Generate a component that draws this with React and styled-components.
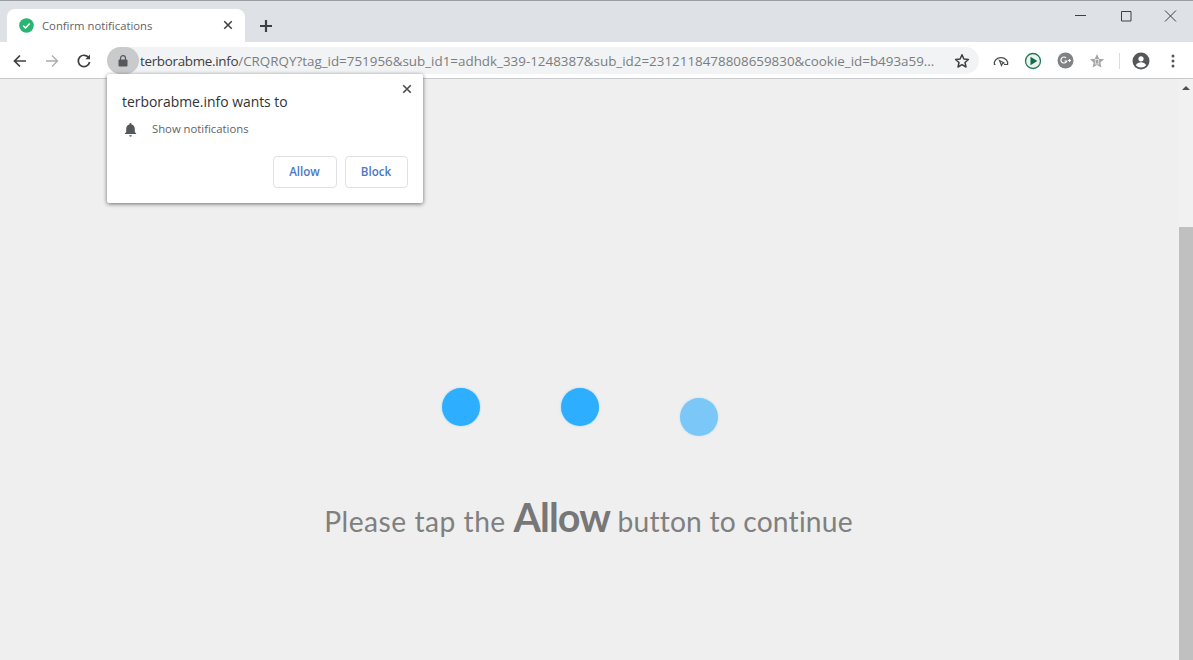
import React from "react";
import styled, { createGlobalStyle } from "styled-components";

const Global = createGlobalStyle`
  html, body { margin: 0; padding: 0; height: 100%; overflow: hidden; background: #efefef; }
  #root { height: 100%; }
  * { box-sizing: border-box; }
`;

const Browser = styled.div`
  width: 1193px; height: 660px; display: flex; flex-direction: column; position: relative; overflow: hidden;
  font-family: "Open Sans", "Noto Sans", sans-serif;
`;
const TabStrip = styled.div`
  height: 42px; flex: none; background: #dee1e6; border-top: 1px solid #9a9da1;
  display: flex; align-items: flex-end; padding-left: 7px;
`;
const Tab = styled.div`
  width: 238px; height: 33px; background: #fff; border-radius: 8px 8px 0 0;
  display: flex; align-items: center; padding: 0 11px 1px 12px;
`;
const TabTitle = styled.span`
  margin-left: 8px; flex: 1; font-size: 11.3px; color: #5f6368;
`;
const NewTab = styled.div`
  width: 16px; height: 16px; margin: 0 0 8px 13px; display: flex;
`;
const WindowControls = styled.div`
  margin-left: auto; align-self: flex-start; display: flex; gap: 29px; padding: 7px 14px 0 0;
`;
const Toolbar = styled.div`
  height: 37px; flex: none; background: #fff; border-bottom: 1px solid #c8cacc;
  display: flex; align-items: center; padding: 1px 12px 0 12px;
`;
const NavIcon = styled.div`
  width: 16px; height: 16px; display: flex; margin-right: ${p => p.$gap}px;
`;
const Omnibox = styled.div`
  width: 872px; height: 27px; margin-left: 15px; background: #f1f3f4; border-radius: 14px;
  display: flex; align-items: center;
`;
const LockChip = styled.div`
  width: 32px; height: 27px; border-radius: 14px; background: #c8cacc; display: flex; align-items: center; justify-content: center; flex: none;
`;
const Url = styled.div`
  margin-left: 1px; flex: 1; font-size: 13.4px; color: #7a7e82; white-space: nowrap;
  b { font-weight: 400; color: #3c4043; letter-spacing: -0.3px; }
`;
const Extensions = styled.div`
  display: flex; align-items: center; margin-left: 13px;
`;
const ExtIcon = styled.div`
  width: 18px; height: 18px; display: flex; align-items: center; justify-content: center; margin-right: ${p => p.$gap}px;
`;
const Divider = styled.div`
  width: 1px; height: 16px; background: #dadce0; margin-right: 12px;
`;
const Page = styled.div`
  flex: 1; display: flex; min-height: 0; background: #efefef;
`;
const Content = styled.main`
  flex: 1; display: flex; flex-direction: column; align-items: center; padding-top: 309px;
`;
const Dots = styled.div`
  display: flex; gap: 81px; height: 48px; margin-left: -20px;
`;
const Dot = styled.div`
  width: 38px; height: 38px; border-radius: 50%; background: #2eaefe; opacity: ${p => p.$fade};
  margin-top: ${p => p.$drop}px; box-shadow: 0 0 2px rgba(46, 174, 254, .5);
`;
const Message = styled.div`
  margin-top: 46px; margin-left: -2px; height: 70px; font-family: "Lato", "Open Sans", sans-serif; font-size: 28.2px; line-height: 70px; color: #808080; white-space: nowrap; letter-spacing: 0.5px;
  strong { font-size: 39.5px; font-weight: 700; color: #777; letter-spacing: -0.9px; }
`;
const MessageTail = styled.span`
  letter-spacing: 0.2px;
`;
const Scrollbar = styled.div`
  width: 14px; flex: none; background: #f1f1f1; display: flex; flex-direction: column; align-items: center;
`;
const ScrollArrow = styled.div`
  margin-top: 7px; width: 0; height: 0; border-left: 4px solid transparent; border-right: 4px solid transparent; border-bottom: 4px solid #505050;
`;
const ScrollThumb = styled.div`
  width: 100%; margin-top: auto; height: 433px; background: #c0c0c0;
`;
const Popup = styled.div`
  position: absolute; left: 107px; top: 74px; width: 316px; height: 129px; background: #fff;
  border-radius: 2px; box-shadow: 0 1px 4px rgba(0,0,0,.55); padding: 18px 15px 0 16px;
`;
const PopupTitle = styled.div`
  font-size: 13.9px; line-height: 19px; color: #303336; margin-left: -1px;
`;
const PopupClose = styled.div`
  position: absolute; right: 10px; top: 9px; width: 12px; height: 12px; display: flex;
`;
const PermRow = styled.div`
  display: flex; align-items: center; margin-top: 9px; font-size: 11.3px; line-height: 18px; color: #5f6368;
`;
const PermIcon = styled.div`
  width: 15px; height: 15px; margin-right: 14px; display: flex;
`;
const Actions = styled.div`
  display: flex; justify-content: flex-end; gap: 8px; margin-top: 18px;
`;
const Btn = styled.button`
  width: ${p => p.$w}px; height: 32px; background: #fff; border: 1px solid #dfe1e5; border-radius: 4px;
  font: 600 11.6px "Open Sans", sans-serif; color: #4a77c4; padding: 0 1px 2px 0;
`;

const Stroke = ({ children, size = 16, color = "#3c4043", w = 1.6 }) => (
  <svg width={size} height={size} viewBox="0 0 16 16" fill="none" stroke={color} strokeWidth={w}>{children}</svg>
);

export default function App() {
  return (
    <Browser>
      <Global />
      <TabStrip>
        <Tab>
          <svg width="15" height="15" viewBox="0 0 15 15">
            <circle cx="7.5" cy="7.5" r="7.3" fill="#2ab573" />
            <path d="M4.2 7.7l2.3 2.2 4.2-4.3" fill="none" stroke="#fff" strokeWidth="1.5" />
          </svg>
          <TabTitle>Confirm notifications</TabTitle>
          <Stroke size={12} w={2}><path d="M3 3l10 10M13 3L3 13" /></Stroke>
        </Tab>
        <NewTab>
          <Stroke size={16} w={2.2}><path d="M8 2v12M2 8h12" /></Stroke>
        </NewTab>
        <WindowControls>
          <Stroke size={16} w={1}><path d="M2 7.500h11" /></Stroke>
          <Stroke size={16} w={1}><path d="M3.500 3.500h9.500v9.500h-9.500z" /></Stroke>
          <Stroke size={16} w={1}><path d="M2 2.500l11 11M13 2.500l-11 11" /></Stroke>
        </WindowControls>
      </TabStrip>
      <Toolbar>
        <NavIcon $gap={16}><Stroke w={1.7}><path d="M14 8H2.5M8 2.5L2.5 8 8 13.5" /></Stroke></NavIcon>
        <NavIcon $gap={16}><Stroke w={1.3} color="#a9acb0"><path d="M2 8h11.5M8 2.5L13.5 8 8 13.5" /></Stroke></NavIcon>
        <NavIcon $gap={0}><Stroke w={1.7}><path d="M13 5.2A5.7 5.7 0 1 0 13.6 9" /><path d="M14 1.5V6.2H9.3z" fill="#3c4043" stroke="none" /></Stroke></NavIcon>
        <Omnibox>
          <LockChip>
            <svg width="10" height="12" viewBox="0 0 10 12">
              <rect x="0.5" y="4.5" width="9" height="7" rx="1" fill="#55585c" />
              <path d="M2.5 5V3.2a2.5 2.5 0 0 1 5 0V5" fill="none" stroke="#55585c" strokeWidth="1.2" />
            </svg>
          </LockChip>
          <Url><b>terborabme.info</b>/CRQRQY?tag_id=751956&amp;sub_id1=adhdk_339-1248387&amp;sub_id2=2312118478808659830&amp;cookie_id=b493a59...</Url>
          <ExtIcon $gap={8}>
            <svg width="16" height="16" viewBox="0 0 16 16"><path d="M8 1.800l1.900 4.200 4.500.5-3.400 3 1 4.500L8 11.700 4 14l1-4.500-3.400-3 4.500-.5z" fill="none" stroke="#3c4043" strokeWidth="1.5" strokeLinejoin="round" /></svg>
          </ExtIcon>
        </Omnibox>
        <Extensions>
          <ExtIcon $gap={14}>
            <svg width="18" height="18" viewBox="0 0 18 18" fill="none" stroke="#4a4d50" strokeWidth="1.2"><path d="M3.500 12.500H2.400C1.600 9 4.600 5.700 9 5.700s7.400 3.300 6.600 6.800H12" /><path d="M7.500 8.500l2 5 .8-1.700 1.700-.8z" /></svg>
          </ExtIcon>
          <ExtIcon $gap={14}>
            <svg width="18" height="18" viewBox="0 0 18 18"><circle cx="9" cy="9" r="7.500" fill="#e9f4ef" stroke="#237a56" strokeWidth="1.3" /><path d="M6.500 4.800v8.400L13.300 9z" fill="#136b46" /></svg>
          </ExtIcon>
          <ExtIcon $gap={14}>
            <svg width="17" height="17" viewBox="0 0 17 17"><circle cx="8.500" cy="8.500" r="8" fill="#808284" /><path d="M9 5.800A3 3 0 1 0 9.800 9H7.500M11 8.500h3M12.500 7v3" fill="none" stroke="#fff" strokeWidth="1.2" /></svg>
          </ExtIcon>
          <ExtIcon $gap={13}>
            <svg width="16" height="16" viewBox="0 0 16 16"><path d="M8 1l2.100 4.700 5 .6-3.700 3.300 1 5L8 12l-4.400 2.600 1-5L.9 6.300l5-.6z" fill="#a2a4a6" /><rect x="6.300" y="6.500" width="3.400" height="4.500" fill="none" stroke="#e4e5e6" strokeWidth=".9" /></svg>
          </ExtIcon>
          <Divider />
          <ExtIcon $gap={21}>
            <svg width="18" height="18" viewBox="0 0 18 18"><circle cx="9" cy="9" r="8.500" fill="#54575a" /><circle cx="9" cy="6.800" r="2.600" fill="#fff" /><path d="M3.800 13.200c1.200-2.200 3.300-2.900 5.200-2.900s4 .7 5.200 2.900A6.700 6.700 0 0 1 9 15.500a6.700 6.700 0 0 1-5.200-2.300z" fill="#fff" /></svg>
          </ExtIcon>
          <svg width="4" height="14" viewBox="0 0 4 14" fill="#54575a"><circle cx="2" cy="2" r="1.500" /><circle cx="2" cy="7" r="1.500" /><circle cx="2" cy="12" r="1.500" /></svg>
        </Extensions>
      </Toolbar>
      <Page>
        <Content>
          <Dots>
            <Dot $fade={1} $drop={0} />
            <Dot $fade={1} $drop={0} />
            <Dot $fade={0.6} $drop={10} />
          </Dots>
          <Message>Please tap the <strong>Allow</strong><MessageTail> button to continue</MessageTail></Message>
        </Content>
        <Scrollbar>
          <ScrollArrow />
          <ScrollThumb />
        </Scrollbar>
      </Page>
      <Popup>
        <PopupTitle>terborabme.info wants to</PopupTitle>
        <PopupClose><Stroke size={12} w={2.2} color="#4a4d50"><path d="M3 3l10 10M13 3L3 13" /></Stroke></PopupClose>
        <PermRow>
          <PermIcon>
            <svg width="15" height="15" viewBox="0 0 14 14" fill="#54575a"><path d="M7 1a1 1 0 0 1 1 1v.4c2 .5 3 2.100 3 4v3l1.300 1.300v.5H1.700v-.5L3 9.400v-3c0-1.900 1-3.500 3-4V2a1 1 0 0 1 1-1z" /><path d="M5.700 12.400h2.600a1.300 1.300 0 0 1-2.600 0z" /></svg>
          </PermIcon>
          Show notifications
        </PermRow>
        <Actions>
          <Btn $w={64}>Allow</Btn>
          <Btn $w={63}>Block</Btn>
        </Actions>
      </Popup>
    </Browser>
  );
}
